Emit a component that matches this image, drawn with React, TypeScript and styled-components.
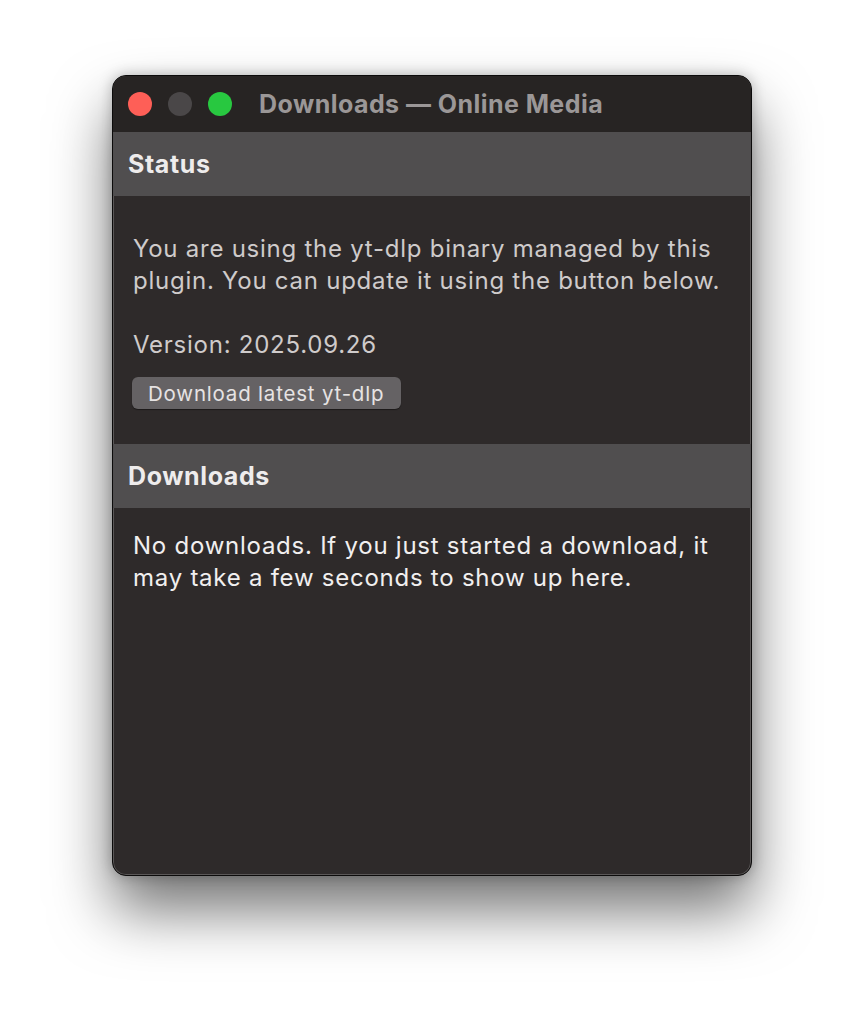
import styled, { createGlobalStyle } from "styled-components";

const GlobalStyle = createGlobalStyle`
  html, body {
    margin: 0;
    padding: 0;
    background: #ffffff;
  }
  body {
    font-family: Inter, "Noto Sans", "Liberation Sans", sans-serif;
    -webkit-font-smoothing: antialiased;
  }
`;

const Page = styled.div`
  display: flex;
  justify-content: center;
  padding-top: 75px;
  height: 1024px;
  box-sizing: border-box;
`;

const Window = styled.div`
  width: 640px;
  height: 801px;
  box-sizing: border-box;
  border-radius: 14px;
  background: #2e2a2a;
  border: 1px solid #0c0b0b;
  box-shadow: inset 0 0 0 1px #5a5757, 0 34px 60px rgba(0, 0, 0, 0.55),
    0 0 14px rgba(0, 0, 0, 0.25);
  overflow: hidden;
  display: flex;
  flex-direction: column;
`;

const TitleBar = styled.div`
  height: 56px;
  flex-shrink: 0;
  background: #272423;
  display: flex;
  align-items: center;
  padding-left: 15px;
`;

const Lights = styled.div`
  display: flex;
  gap: 16px;
  margin-right: 27px;
`;

const Light = styled.span<{ color: string }>`
  width: 24px;
  height: 24px;
  border-radius: 50%;
  background: ${(p) => p.color};
`;

const Title = styled.div`
  font-size: 25px;
  font-weight: 700;
  letter-spacing: 0.45px;
  color: #9b9797;
`;

const SectionHeader = styled.div`
  height: 64px;
  flex-shrink: 0;
  background: #504e4f;
  display: flex;
  align-items: center;
  padding-left: 15px;
  font-size: 25px;
  font-weight: 700;
  letter-spacing: 0.6px;
  color: #eeecec;
`;

const SectionBody = styled.div<{ bright?: boolean }>`
  padding: ${(p) => (p.bright ? "22px 20px 0" : "37px 20px 35px")};
  font-size: 24px;
  letter-spacing: 0.75px;
  line-height: 32px;
  color: ${(p) => (p.bright ? "#f1efef" : "#cfcbcb")};
  flex: ${(p) => (p.bright ? 1 : "none")};
`;

const Para = styled.p`
  margin: 0 0 32px;
`;

const Version = styled.p`
  margin: 0 0 16px;
`;

const Button = styled.button`
  font-family: inherit;
  font-size: 20.5px;
  letter-spacing: 0.8px;
  color: #e6e3e3;
  background: #656264;
  border: none;
  border-radius: 6px;
  height: 32px;
  padding: 0 17px 0 16px;
  margin-left: -1px;
  box-shadow: 0 1px 1px rgba(0, 0, 0, 0.4);
  display: block;
`;

export default function App() {
  return (
    <>
      <GlobalStyle />
      <Page>
        <Window>
          <TitleBar>
            <Lights>
              <Light color="#fe5f57" />
              <Light color="#4a4748" />
              <Light color="#28c840" />
            </Lights>
            <Title>Downloads — Online Media</Title>
          </TitleBar>
          <SectionHeader>Status</SectionHeader>
          <SectionBody>
            <Para>
              You are using the yt-dlp binary managed by this plugin. You can
              update it using the button below.
            </Para>
            <Version>Version: 2025.09.26</Version>
            <Button>Download latest yt-dlp</Button>
          </SectionBody>
          <SectionHeader>Downloads</SectionHeader>
          <SectionBody bright>
            No downloads. If you just started a download, it may take a few
            seconds to show up here.
          </SectionBody>
        </Window>
      </Page>
    </>
  );
}
